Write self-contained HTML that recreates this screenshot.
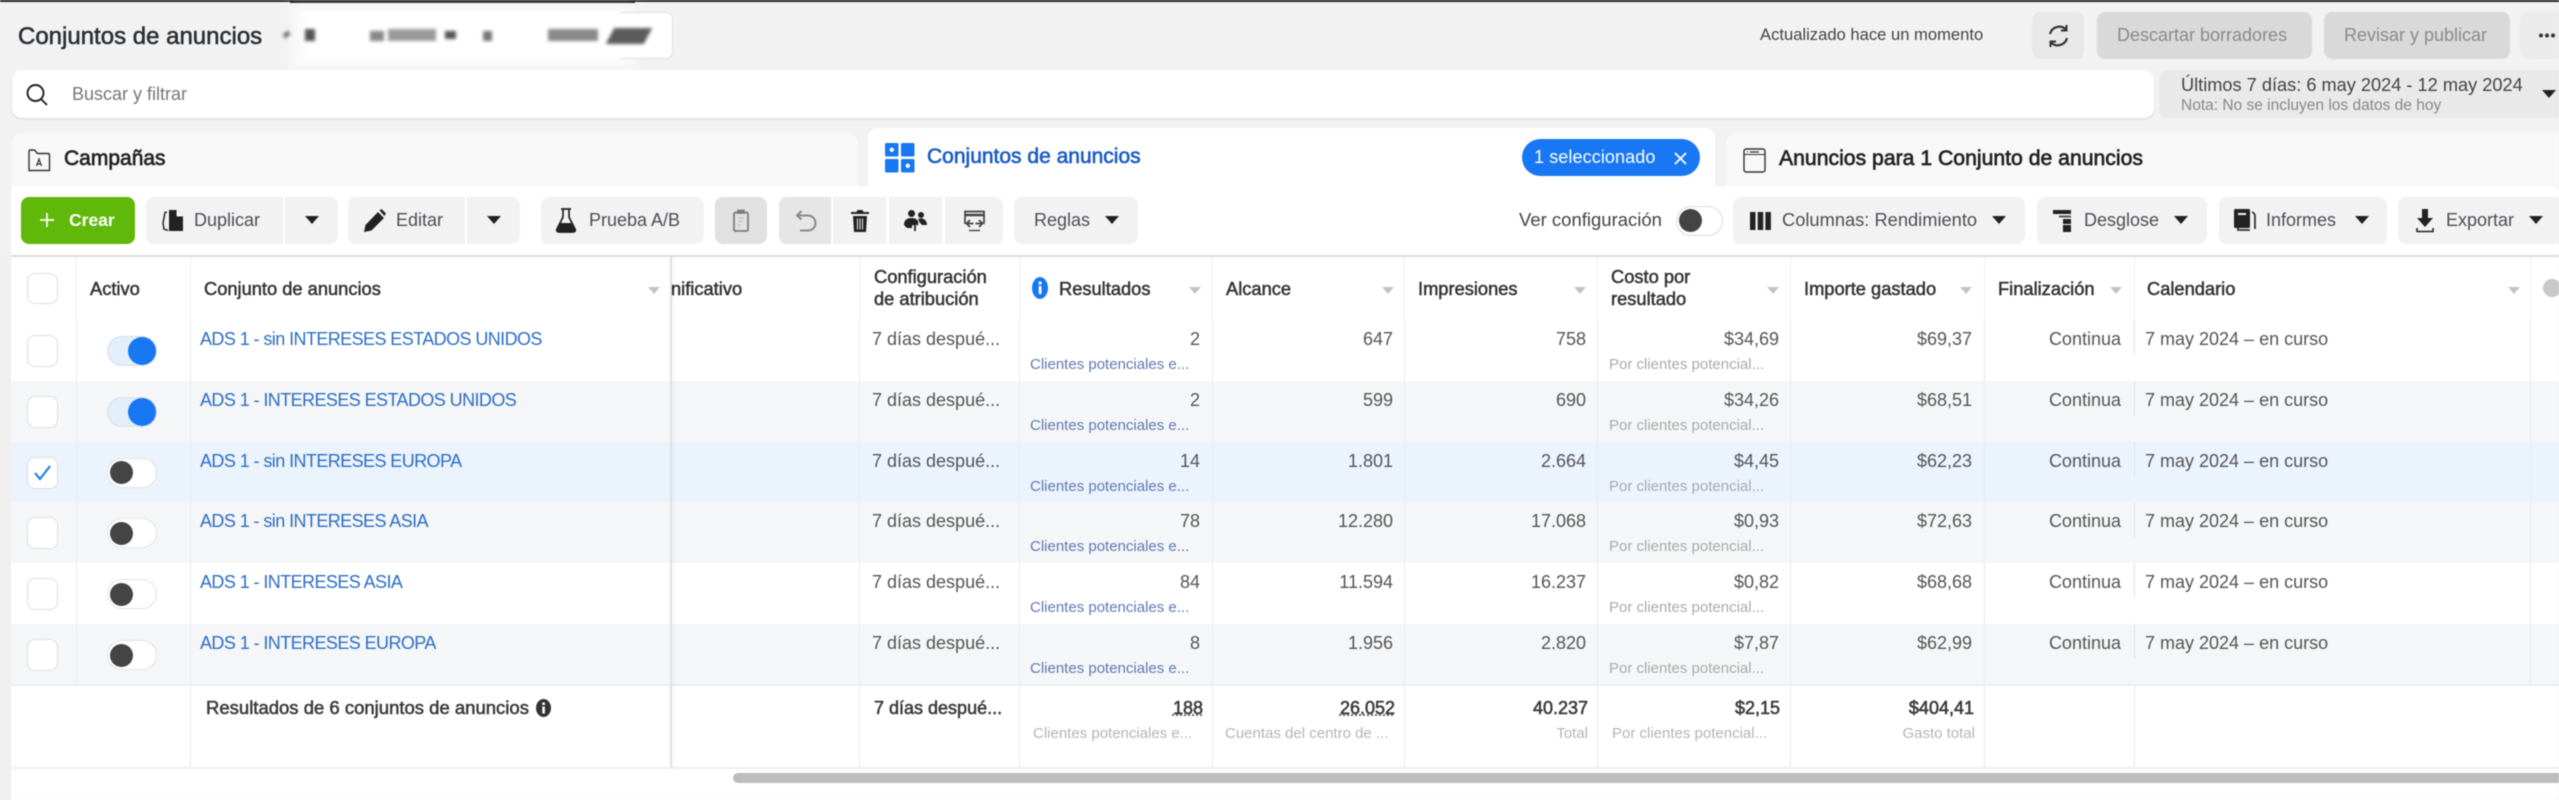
<!DOCTYPE html>
<html lang="es"><head><meta charset="utf-8"><title>Conjuntos de anuncios</title>
<style>
*{box-sizing:border-box}
html,body{margin:0;padding:0;width:2559px;height:800px;overflow:hidden;background:#f2f2f2;font-family:"Liberation Sans",sans-serif}
.a{position:absolute}
#root{position:absolute;left:0;top:0;width:2559px;height:800px;overflow:hidden;filter:blur(.5px)}
.tx{position:absolute;white-space:nowrap;line-height:24px;font-size:18px;color:#444}
.b{position:absolute;top:197px;height:47px;background:#f2f2f2;border-radius:8px}
.t{position:absolute;width:0;height:0;border-left:7px solid transparent;border-right:7px solid transparent;border-top:8px solid #222;top:216px}
.bl{font-size:18px;color:#4b4f56;top:208px}
svg{position:absolute;overflow:visible}
.r{position:absolute;left:0;width:2559px;height:61px}
.r .v{position:absolute;top:0;bottom:0;width:1px;background:#e9ebed}
.m,.s{position:absolute;white-space:nowrap;line-height:22px}
.m{top:8px;font-size:18px;color:#555}
.s{top:34px;font-size:15px;color:#aaa}
.n{left:200px;color:#2e6fc6;font-size:18px;letter-spacing:-.58px}
.cfg{left:872px}
.cl{left:1030px;color:#6079b4}
.pc{left:1609px}
.R{text-align:right}
.c1{left:1019px;width:181px}.c2{left:1212px;width:181px}.c3{left:1404px;width:182px}.c4{left:1597px;width:182px}.c5{left:1790px;width:182px}.c6{left:1984px;width:137px}
.cal{left:2145px}
.cb{position:absolute;left:27px;top:15px;width:31px;height:32px;border:1.5px solid #dcdfe2;border-radius:8px;background:#fff}
.tg{position:absolute;left:107px;top:16px;width:50px;height:30px;border-radius:15px;background:#fff;border:1.5px solid #e2e4e6}
.tg i{position:absolute;left:2px;top:2.5px;width:23px;height:23px;border-radius:50%;background:#444}
.tg.on{background:#e3eefb;border-color:#d6e0ea}
.tg.on i{left:20px;top:0;width:28px;height:28px;background:#1877f2}
.sp{position:absolute;top:0;left:2134px;width:1px;height:35px;background:#dfe3e6}
.h{position:absolute;white-space:nowrap;font-size:18.3px;line-height:21px;color:#333;-webkit-text-stroke:.5px #333}
.ar{position:absolute;top:287px;width:0;height:0;border-left:6px solid transparent;border-right:6px solid transparent;border-top:7px solid #c2c4c7}
.hv{position:absolute;top:257px;height:63px;width:1px;background:#eef0f2}
.sv{position:absolute;top:685px;height:83px;width:1px;background:#e8eaec}
.bm{position:absolute;white-space:nowrap;font-size:18px;line-height:22px;color:#3a3a3a;-webkit-text-stroke:.55px #3a3a3a;top:697px}
.bs{position:absolute;white-space:nowrap;font-size:15px;line-height:22px;color:#b5b5b5;top:723px}
</style></head><body><div id="root">

<div class="a" style="left:0;top:0;width:2559px;height:2px;background:#23262b"></div>
<div class="a" style="left:290px;top:0;width:345px;height:3px;background:#111"></div>

<div class="tx" style="left:18px;top:24px;font-size:24px;color:#2b2f33;line-height:26px;-webkit-text-stroke:.55px #2b2f33">Conjuntos de anuncios</div>
<div class="a" style="left:290px;top:6px;width:345px;height:62px;background:#fff;opacity:.75;filter:blur(6px)"></div>
<div class="a" style="left:285px;top:12px;width:388px;height:47px;background:linear-gradient(90deg,#f2f2f2,#fff 24px);border-radius:0 7px 7px 0"></div>
<div class="a" style="left:620px;top:12px;width:53px;height:47px;border:1px solid #dedede;border-left:0;border-radius:0 7px 7px 0"></div>
<div class="a" style="left:285px;top:12px;width:390px;height:47px;filter:blur(1.5px)">
  <div class="a" style="left:-2px;top:20px;width:7px;height:5px;background:#777;transform:rotate(-40deg)"></div>
  <div class="a" style="left:20px;top:17px;width:10px;height:12px;background:#555"></div>
  <div class="a" style="left:85px;top:19px;width:14px;height:10px;background:#888"></div>
  <div class="a" style="left:103px;top:17px;width:48px;height:12px;background:#9a9a9a"></div>
  <div class="a" style="left:160px;top:19px;width:11px;height:8px;background:#555"></div>
  <div class="a" style="left:198px;top:19px;width:9px;height:10px;background:#777"></div>
  <div class="a" style="left:263px;top:17px;width:50px;height:12px;background:#8a8a8a"></div>
  <div class="a" style="left:325px;top:16px;width:38px;height:16px;background:#5c5c5c;transform:skewX(-28deg)"></div>
</div>

<div class="tx" style="left:1760px;top:23px;font-size:16.6px;color:#444">Actualizado hace un momento</div>
<div class="a" style="left:2032px;top:12px;width:52px;height:47px;background:#e8e8e8;border-radius:8px"></div>
<svg style="left:2047px;top:24px" width="23" height="24" viewBox="0 0 23 24" fill="none" stroke="#333" stroke-width="2.2"><path d="M19 5.5 A9.5 9.5 0 0 0 3 10"/><path d="M4 18.5 A9.5 9.5 0 0 0 20 14"/><path d="M19.5 1v5.5h-5.5" stroke-width="2"/><path d="M3.5 23v-5.5h5.5" stroke-width="2"/></svg>
<div class="a" style="left:2097px;top:12px;width:215px;height:47px;background:#d9d9d9;border-radius:8px"></div>
<div class="tx" style="left:2117px;top:23px;color:#8a8a8a">Descartar borradores</div>
<div class="a" style="left:2324px;top:12px;width:186px;height:47px;background:#d9d9d9;border-radius:8px"></div>
<div class="tx" style="left:2344px;top:23px;color:#8a8a8a">Revisar y publicar</div>
<div class="a" style="left:2520px;top:12px;width:39px;height:47px;background:#ebebeb;border-radius:8px 0 0 8px"></div>
<svg style="left:2538px;top:33px" width="18" height="5" viewBox="0 0 18 5" fill="#333"><circle cx="3" cy="2.5" r="2"/><circle cx="9" cy="2.5" r="2"/><circle cx="15" cy="2.5" r="2"/></svg>

<div class="a" style="left:12px;top:70px;width:2142px;height:48px;background:#fff;border-radius:10px;box-shadow:0 1px 2px rgba(0,0,0,.12)"></div>
<svg style="left:25px;top:83px" width="24" height="24" viewBox="0 0 24 24" fill="none" stroke="#222" stroke-width="1.9"><circle cx="10.5" cy="10" r="8"/><path d="M16 16l6 6"/></svg>
<div class="tx" style="left:72px;top:82px;font-size:18px;color:#777">Buscar y filtrar</div>

<div class="a" style="left:2159px;top:70px;width:400px;height:48px;background:#e9e9e9;border-radius:8px 0 0 8px"></div>
<div class="tx" style="left:2181px;top:73px;font-size:18.2px;color:#444">Últimos 7 días: 6 may 2024 - 12 may 2024</div>
<div class="tx" style="left:2181px;top:94px;font-size:15.5px;color:#888">Nota: No se incluyen los datos de hoy</div>
<div class="t" style="left:2542px;top:90px;border-left-width:7px;border-right-width:7px"></div>

<div class="a" style="left:0;top:186px;width:2559px;height:614px;background:#fff"></div>
<div class="a" style="left:12px;top:133px;width:846px;height:60px;background:#f8f8f8;border-radius:10px 10px 0 0"></div>
<svg style="left:27px;top:149px" width="24" height="23" viewBox="0 0 24 23" fill="none" stroke="#333" stroke-width="1.4"><path d="M2 21.5V2.5C2 1.5 2.5 1 3.5 1h4l3 3.5H21c1 0 1.5.5 1.5 1.5v15.5z"/><path d="M9.5 17l2.5-7 2.5 7M10.5 15h3" stroke-width="1.2"/></svg>
<div class="tx" style="left:64px;top:147px;font-size:21px;color:#222;-webkit-text-stroke:.65px #222">Campañas</div>

<div class="a" style="left:868px;top:128px;width:847px;height:65px;background:#fff;border-radius:10px 10px 0 0"></div>
<svg style="left:885px;top:143px" width="30" height="30" viewBox="0 0 30 30"><rect x="0" y="0" width="13.5" height="13.5" rx="1.5" fill="#1877f2"/><rect x="16" y="0" width="13.5" height="13.5" rx="1.5" fill="#1877f2"/><rect x="0" y="16" width="13.5" height="13.5" rx="1.5" fill="#1877f2"/><rect x="16" y="16" width="13.5" height="13.5" rx="1.5" fill="#1877f2"/><circle cx="6.8" cy="6.8" r="2.2" fill="#fff"/><circle cx="22.8" cy="22.8" r="2.2" fill="#fff"/></svg>
<div class="tx" style="left:927px;top:145px;font-size:21px;color:#1a5bc4;-webkit-text-stroke:.6px #1a5bc4">Conjuntos de anuncios</div>
<div class="a" style="left:1522px;top:139px;width:178px;height:37px;background:#1877f2;border-radius:19px"></div>
<div class="tx" style="left:1534px;top:145px;font-size:18px;color:#fff;letter-spacing:.1px">1 seleccionado</div>
<svg style="left:1674px;top:152px" width="13" height="13" viewBox="0 0 13 13" stroke="#fff" stroke-width="1.8"><path d="M1 1l11 11M12 1L1 12"/></svg>

<div class="a" style="left:1726px;top:133px;width:833px;height:60px;background:#f8f8f8;border-radius:10px 0 0 0"></div>
<svg style="left:1743px;top:148px" width="23" height="25" viewBox="0 0 23 25" fill="none" stroke="#333" stroke-width="1.4"><rect x="1" y="1" width="21" height="23" rx="2"/><path d="M1 6.5h21" stroke-width="1"/><path d="M4 4h1M7 4h9" stroke-width="1.2"/></svg>
<div class="tx" style="left:1779px;top:147px;font-size:21.2px;color:#222;-webkit-text-stroke:.65px #222">Anuncios para 1 Conjunto de anuncios</div>

<div class="a" style="left:0;top:186px;width:2559px;height:70px;background:#fff;border-radius:8px"></div>

<div class="b" style="left:21px;width:114px;background:#5fb80a"></div>
<svg style="left:40px;top:213px" width="14" height="14" viewBox="0 0 14 14" stroke="#fff" stroke-width="1.7"><path d="M7 0v14M0 7h14"/></svg>
<div class="tx" style="left:69px;top:208px;font-size:17.5px;color:#fff;font-weight:bold">Crear</div>

<div class="b" style="left:146px;width:137px;border-radius:8px 0 0 8px"></div>
<div class="b" style="left:285px;width:53px;border-radius:0 8px 8px 0"></div>
<svg style="left:162px;top:209px" width="22" height="24" viewBox="0 0 22 24"><path d="M5 3L3 3.5 1 14l1 6 4 1.5" fill="none" stroke="#333" stroke-width="1.6"/><path d="M7 1h8l6 6v15H7z" fill="#222"/><path d="M15 1v6h6" fill="#fff" stroke="#fff" stroke-width=".8"/></svg>
<div class="tx bl" style="left:194px">Duplicar</div>
<div class="t" style="left:305px"></div>

<div class="b" style="left:348px;width:117px;border-radius:8px 0 0 8px"></div>
<div class="b" style="left:467px;width:53px;border-radius:0 8px 8px 0"></div>
<svg style="left:364px;top:209px" width="22" height="23" viewBox="0 0 22 23"><path d="M0 23l1.5-7L14 3l6 6L7.5 21.500z" fill="#222"/><path d="M15.500 1.500l2-1.500 4.500 4.500-1.500 2.500z" fill="#222"/></svg>
<div class="tx bl" style="left:396px">Editar</div>
<div class="t" style="left:487px"></div>

<div class="b" style="left:541px;width:163px"></div>
<svg style="left:556px;top:208px" width="20" height="25" viewBox="0 0 20 25"><path d="M5 1h10M7 1v8L1 21c-.8 1.800 0 3 2 3h14c2 0 2.800-1.200 2-3L13 9V1" fill="none" stroke="#222" stroke-width="1.7"/><path d="M4.500 15h11l3.500 7c.3 1-.3 2-1.500 2h-15C1.300 24 .7 23 1 22z" fill="#222"/></svg>
<div class="tx bl" style="left:589px">Prueba A/B</div>

<div class="b" style="left:715px;width:52px;background:#e1e1e1"></div>
<svg style="left:733px;top:209px" width="16" height="23" viewBox="0 0 16 23" fill="none" stroke="#7c7c7c" stroke-width="1.800"><rect x="1" y="3.500" width="14" height="18.500" rx="1.500"/><path d="M5 4V1.500h6V4z" fill="#7c7c7c"/><path d="M5.500 9h5M5.500 12.500h4M5.500 16h2" stroke-width="1.200" stroke="#bbb"/></svg>

<div class="b" style="left:779px;width:52px;background:#e6e6e6;border-radius:8px 0 0 8px"></div>
<svg style="left:796px;top:210px" width="19" height="22" viewBox="0 0 19 22" fill="none" stroke="#888" stroke-width="2"><path d="M5.500 1L1 5.500l4.500 4M1 5.500h11a6 6 0 0 1 0 15H4"/></svg>
<div class="b" style="left:833px;width:53px;border-radius:0"></div>
<svg style="left:851px;top:209px" width="18" height="23" viewBox="0 0 18 23"><path d="M0 5h18V3h-5.500l-1-2h-5l-1 2H0z" fill="#222"/><path d="M2 7h14l-1 16H3z" fill="#222"/><path d="M6.500 9.500v11M11.500 9.500v11M9 9.500v11" stroke="#f2f2f2" stroke-width="1"/></svg>
<div class="b" style="left:889px;width:53px;border-radius:0"></div>
<svg style="left:904px;top:210px" width="23" height="21" viewBox="0 0 23 21" fill="#222"><circle cx="7.500" cy="3.500" r="3.500"/><circle cx="17" cy="5" r="3"/><path d="M0 15c0-5 3-7 7.500-7s6.500 2 7 5l-3 2H8v3H3z"/><path d="M14 9c5-2 9 1 9 6h-5l-2-2z"/><path d="M11 12v9M8 15l3-3 3 3" stroke="#222" stroke-width="1.800" fill="none"/></svg>
<div class="b" style="left:945px;width:58px;border-radius:0 8px 8px 0"></div>
<svg style="left:963px;top:210px" width="23" height="22" viewBox="0 0 23 22" fill="none" stroke="#444" stroke-width="1.700"><path d="M2 14V1.500h19V14" /><path d="M2 5h19" stroke-width="2.400"/><path d="M7 10l-3.500 3.500L7 17M16 10l3.500 3.500L16 17M3.500 13.500h7M12.500 13.500h7" stroke-width="1.700"/><path d="M6 20.500h11" stroke-width="1.400"/></svg>

<div class="b" style="left:1014px;width:124px"></div>
<div class="tx bl" style="left:1034px">Reglas</div>
<div class="t" style="left:1105px"></div>

<div class="tx bl" style="left:1519px;color:#444;font-size:18.5px">Ver configuración</div>
<div class="a" style="left:1676px;top:206px;width:47px;height:30px;border-radius:15px;border:1.500px solid #dcdcdc;background:#fff"><div class="a" style="left:2px;top:2px;width:23px;height:23px;border-radius:50%;background:#444"></div></div>

<div class="b" style="left:1733px;width:292px"></div>
<svg style="left:1750px;top:212px" width="21" height="18" viewBox="0 0 21 18" fill="#222"><rect width="5.500" height="18"/><rect x="7.700" width="5.500" height="18"/><rect x="15.400" width="5.500" height="18"/></svg>
<div class="tx bl" style="left:1782px;font-size:18.3px">Columnas: Rendimiento</div>
<div class="t" style="left:1992px"></div>

<div class="b" style="left:2037px;width:170px"></div>
<svg style="left:2053px;top:210px" width="18" height="22" viewBox="0 0 18 22" fill="#222"><rect width="18" height="4"/><rect x="6" y="5.500" width="12" height="2" fill="#555"/><rect x="10" y="9" width="8" height="5"/><rect x="10" y="15" width="8" height="7"/></svg>
<div class="tx bl" style="left:2084px">Desglose</div>
<div class="t" style="left:2174px"></div>

<div class="b" style="left:2219px;width:168px"></div>
<svg style="left:2234px;top:209px" width="22" height="24" viewBox="0 0 22 24"><path d="M4 4v17h12" fill="none" stroke="#333" stroke-width="1.800"/><path d="M18 3c2 1 3 2 3 4v13" fill="none" stroke="#333" stroke-width="1.800"/><rect x="0" y="0" width="16" height="19" rx="1.500" fill="#222"/><rect x="4" y="4" width="8" height="2" fill="#f2f2f2"/></svg>
<div class="tx bl" style="left:2266px">Informes</div>
<div class="t" style="left:2355px"></div>

<div class="b" style="left:2398px;width:161px;border-radius:8px 0 0 8px"></div>
<svg style="left:2416px;top:209px" width="18" height="24" viewBox="0 0 18 24" fill="#222"><path d="M6 0h6v9h5l-8 9-8-9h5z"/><path d="M1 19v3.500h16V19" fill="none" stroke="#222" stroke-width="1.600"/></svg>
<div class="tx bl" style="left:2446px">Exportar</div>
<div class="t" style="left:2529px"></div>

<!-- table -->
<div class="a" style="left:0;top:255px;width:2559px;height:2px;background:#dcdcdc"></div>
<div class="a" style="left:0;top:257px;width:2559px;height:63px;background:#fff"></div>
<div class="hv" style="left:76px"></div><div class="hv" style="left:190px"></div><div class="hv" style="left:859px"></div><div class="hv" style="left:1019px"></div><div class="hv" style="left:1212px"></div><div class="hv" style="left:1404px"></div><div class="hv" style="left:1597px"></div><div class="hv" style="left:1790px"></div><div class="hv" style="left:1984px"></div><div class="hv" style="left:2134px"></div><div class="hv" style="left:2530px"></div>

<div class="a" style="left:27px;top:273px;width:31px;height:31px;border:1.500px solid #dcdfe2;border-radius:8px;background:#fff"></div>
<div class="h" style="left:90px;top:278px">Activo</div>
<div class="h" style="left:204px;top:278px">Conjunto de anuncios</div><div class="ar" style="left:648px"></div>
<div class="h" style="left:671px;top:278px;width:120px;overflow:hidden"><span>nificativo</span></div>
<div class="h" style="left:874px;top:266px">Configuración</div>
<div class="h" style="left:874px;top:288px">de atribución</div>
<svg style="left:1032px;top:277px" width="16" height="22" viewBox="0 0 16 22"><ellipse cx="8" cy="11" rx="8" ry="11" fill="#1877f2"/><rect x="6.700" y="9" width="2.800" height="8" fill="#fff"/><rect x="6.700" y="4.500" width="2.800" height="3" fill="#fff"/></svg>
<div class="h" style="left:1059px;top:278px">Resultados</div><div class="ar" style="left:1189px"></div>
<div class="h" style="left:1226px;top:278px">Alcance</div><div class="ar" style="left:1382px"></div>
<div class="h" style="left:1418px;top:278px">Impresiones</div><div class="ar" style="left:1574px"></div>
<div class="h" style="left:1611px;top:266px">Costo por</div>
<div class="h" style="left:1611px;top:288px">resultado</div><div class="ar" style="left:1767px"></div>
<div class="h" style="left:1804px;top:278px">Importe gastado</div><div class="ar" style="left:1960px"></div>
<div class="h" style="left:1998px;top:278px">Finalización</div><div class="ar" style="left:2110px"></div>
<div class="h" style="left:2147px;top:278px">Calendario</div><div class="ar" style="left:2508px"></div>
<div class="a" style="left:2543px;top:279px;width:18px;height:18px;border-radius:50%;background:#c8c8c8"></div>

<!-- rows -->
<div class="r" style="top:320px;background:#fff">
<div class="v" style="left:1019px"></div><div class="v" style="left:1212px"></div><div class="v" style="left:1404px"></div><div class="v" style="left:1597px"></div><div class="v" style="left:1790px"></div><div class="v" style="left:1984px"></div><div class="v" style="left:2530px"></div><div class="v" style="left:859px"></div><div class="v" style="left:76px"></div><div class="v" style="left:190px"></div>
<div class="sp"></div><div class="cb"></div><div class="tg on"><i></i></div>
<div class="m n">ADS 1 - sin INTERESES ESTADOS UNIDOS</div>
<div class="m cfg">7 días despué...</div>
<div class="m R c1">2</div><div class="s cl">Clientes potenciales e...</div>
<div class="m R c2">647</div><div class="m R c3">758</div>
<div class="m R c4">$34,69</div><div class="s pc">Por clientes potencial...</div>
<div class="m R c5">$69,37</div><div class="m R c6">Continua</div><div class="m cal">7 may 2024 – en curso</div>
</div>

<div class="r" style="top:381px;background:#f5f6f7">
<div class="v" style="left:1019px"></div><div class="v" style="left:1212px"></div><div class="v" style="left:1404px"></div><div class="v" style="left:1597px"></div><div class="v" style="left:1790px"></div><div class="v" style="left:1984px"></div><div class="v" style="left:2530px"></div><div class="v" style="left:859px"></div><div class="v" style="left:76px"></div><div class="v" style="left:190px"></div>
<div class="sp"></div><div class="cb"></div><div class="tg on"><i></i></div>
<div class="m n">ADS 1 - INTERESES ESTADOS UNIDOS</div>
<div class="m cfg">7 días despué...</div>
<div class="m R c1">2</div><div class="s cl">Clientes potenciales e...</div>
<div class="m R c2">599</div><div class="m R c3">690</div>
<div class="m R c4">$34,26</div><div class="s pc">Por clientes potencial...</div>
<div class="m R c5">$68,51</div><div class="m R c6">Continua</div><div class="m cal">7 may 2024 – en curso</div>
</div>

<div class="r" style="top:441.500px;background:#ebf3fd">
<div class="v" style="left:1019px"></div><div class="v" style="left:1212px"></div><div class="v" style="left:1404px"></div><div class="v" style="left:1597px"></div><div class="v" style="left:1790px"></div><div class="v" style="left:1984px"></div><div class="v" style="left:2530px"></div><div class="v" style="left:859px"></div><div class="v" style="left:76px"></div><div class="v" style="left:190px"></div>
<div class="sp"></div><div class="cb"><svg style="left:6px;top:7px" width="17" height="16" viewBox="0 0 17 16" fill="none" stroke="#1877f2" stroke-width="2"><path d="M1 8l5 6L16 1"/></svg></div><div class="tg"><i></i></div>
<div class="m n">ADS 1 - sin INTERESES EUROPA</div>
<div class="m cfg">7 días despué...</div>
<div class="m R c1">14</div><div class="s cl">Clientes potenciales e...</div>
<div class="m R c2">1.801</div><div class="m R c3">2.664</div>
<div class="m R c4">$4,45</div><div class="s pc">Por clientes potencial...</div>
<div class="m R c5">$62,23</div><div class="m R c6">Continua</div><div class="m cal">7 may 2024 – en curso</div>
</div>

<div class="r" style="top:502px;background:#f5f6f7">
<div class="v" style="left:1019px"></div><div class="v" style="left:1212px"></div><div class="v" style="left:1404px"></div><div class="v" style="left:1597px"></div><div class="v" style="left:1790px"></div><div class="v" style="left:1984px"></div><div class="v" style="left:2530px"></div><div class="v" style="left:859px"></div><div class="v" style="left:76px"></div><div class="v" style="left:190px"></div>
<div class="sp"></div><div class="cb"></div><div class="tg"><i></i></div>
<div class="m n">ADS 1 - sin INTERESES ASIA</div>
<div class="m cfg">7 días despué...</div>
<div class="m R c1">78</div><div class="s cl">Clientes potenciales e...</div>
<div class="m R c2">12.280</div><div class="m R c3">17.068</div>
<div class="m R c4">$0,93</div><div class="s pc">Por clientes potencial...</div>
<div class="m R c5">$72,63</div><div class="m R c6">Continua</div><div class="m cal">7 may 2024 – en curso</div>
</div>

<div class="r" style="top:563px;background:#fff">
<div class="v" style="left:1019px"></div><div class="v" style="left:1212px"></div><div class="v" style="left:1404px"></div><div class="v" style="left:1597px"></div><div class="v" style="left:1790px"></div><div class="v" style="left:1984px"></div><div class="v" style="left:2530px"></div><div class="v" style="left:859px"></div><div class="v" style="left:76px"></div><div class="v" style="left:190px"></div>
<div class="sp"></div><div class="cb"></div><div class="tg"><i></i></div>
<div class="m n">ADS 1 - INTERESES ASIA</div>
<div class="m cfg">7 días despué...</div>
<div class="m R c1">84</div><div class="s cl">Clientes potenciales e...</div>
<div class="m R c2">11.594</div><div class="m R c3">16.237</div>
<div class="m R c4">$0,82</div><div class="s pc">Por clientes potencial...</div>
<div class="m R c5">$68,68</div><div class="m R c6">Continua</div><div class="m cal">7 may 2024 – en curso</div>
</div>

<div class="r" style="top:624px;background:#f5f6f7">
<div class="v" style="left:1019px"></div><div class="v" style="left:1212px"></div><div class="v" style="left:1404px"></div><div class="v" style="left:1597px"></div><div class="v" style="left:1790px"></div><div class="v" style="left:1984px"></div><div class="v" style="left:2530px"></div><div class="v" style="left:859px"></div><div class="v" style="left:76px"></div><div class="v" style="left:190px"></div>
<div class="sp"></div><div class="cb"></div><div class="tg"><i></i></div>
<div class="m n">ADS 1 - INTERESES EUROPA</div>
<div class="m cfg">7 días despué...</div>
<div class="m R c1">8</div><div class="s cl">Clientes potenciales e...</div>
<div class="m R c2">1.956</div><div class="m R c3">2.820</div>
<div class="m R c4">$7,87</div><div class="s pc">Por clientes potencial...</div>
<div class="m R c5">$62,99</div><div class="m R c6">Continua</div><div class="m cal">7 may 2024 – en curso</div>
</div>

<!-- summary -->
<div class="a" style="left:0;top:684px;width:2559px;height:2px;background:#eaecee"></div>
<div class="sv" style="left:190px"></div><div class="sv" style="left:859px"></div><div class="sv" style="left:1019px"></div><div class="sv" style="left:1212px"></div><div class="sv" style="left:1404px"></div><div class="sv" style="left:1597px"></div><div class="sv" style="left:1790px"></div><div class="sv" style="left:1984px"></div><div class="sv" style="left:2134px"></div>
<div class="bm" style="left:206px;font-size:18.5px">Resultados de 6 conjuntos de anuncios</div>
<svg style="left:536px;top:699px" width="15" height="18" viewBox="0 0 15 18"><ellipse cx="7.500" cy="9" rx="7.500" ry="9" fill="#333"/><rect x="6.300" y="7.500" width="2.600" height="7" fill="#fff"/><rect x="6.300" y="3.500" width="2.600" height="2.500" fill="#fff"/></svg>
<div class="bm" style="left:874px">7 días despué...</div>
<div class="bm R" style="left:1019px;width:184px;text-decoration:underline dotted #555">188</div>
<div class="bm R" style="left:1212px;width:183px;text-decoration:underline dotted #555">26.052</div>
<div class="bm R" style="left:1404px;width:184px">40.237</div>
<div class="bm R" style="left:1597px;width:183px">$2,15</div>
<div class="bm R" style="left:1790px;width:184px">$404,41</div>
<div class="bs" style="left:1033px">Clientes potenciales e...</div>
<div class="bs" style="left:1225px">Cuentas del centro de ...</div>
<div class="bs R" style="left:1404px;width:184px">Total</div>
<div class="bs" style="left:1612px">Por clientes potencial...</div>
<div class="bs R" style="left:1790px;width:185px">Gasto total</div>
<div class="a" style="left:0;top:767px;width:2559px;height:2px;background:#f0f0f0"></div>
<div class="a" style="left:733px;top:773px;width:1826px;height:10px;background:#bdbdbd;border-radius:5px 0 0 5px"></div>

<!-- frozen pane edge and left strip -->
<div class="a" style="left:670px;top:257px;width:2px;height:511px;background:#dfe1e3;box-shadow:2px 0 3px rgba(0,0,0,.05)"></div>
<div class="a" style="left:0;top:256px;width:11px;height:544px;background:#f0f0f0"></div>
<div class="a" style="left:0;top:186px;width:11px;height:70px;background:#f2f2f2"></div>
</div></body></html>
